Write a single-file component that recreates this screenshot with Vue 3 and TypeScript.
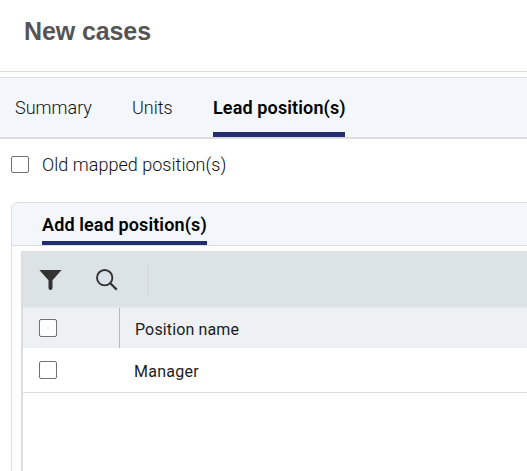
<script setup lang="ts">
import { ref } from 'vue'

interface Tab {
  id: string
  label: string
}

const tabs: Tab[] = [
  { id: 'summary', label: 'Summary' },
  { id: 'units', label: 'Units' },
  { id: 'lead', label: 'Lead position(s)' },
]
const activeTab = ref('lead')
const showOld = ref(false)
const allSelected = ref(false)
const rows = ref([{ name: 'Manager', selected: false }])
</script>

<template>
  <main class="page">
    <header class="heading"><h1>New cases</h1></header>

    <nav class="tabs">
      <button
        v-for="tab in tabs"
        :key="tab.id"
        :class="['tab', tab.id, { active: tab.id === activeTab }]"
        @click="activeTab = tab.id"
      >
        <span>{{ tab.label }}</span>
      </button>
    </nav>

    <label class="old">
      <input v-model="showOld" class="check short" type="checkbox" />
      <span>Old mapped position(s)</span>
    </label>

    <section class="panel">
      <div class="panel-head"><h2><span>Add lead position(s)</span></h2></div>
      <div class="grid">
        <div class="toolbar">
          <svg class="filter" width="24" height="22" viewBox="0 0 24 22">
            <path d="M.3 1H22.6L13.5 11.3V19a2 2 0 0 1-4 0V11.3Z" fill="#333" />
          </svg>
          <svg class="search" width="22" height="22" viewBox="0 0 22 22" fill="none" stroke="#333">
            <circle cx="8.7" cy="8.7" r="7.7" stroke-width="1.9" />
            <path d="M14.3 14.3L20.2 20.1" stroke-width="2.2" stroke-linecap="round" />
          </svg>
          <i class="separator"></i>
        </div>
        <div class="row head">
          <div class="cell select"><input v-model="allSelected" class="check" type="checkbox" /></div>
          <div class="cell name"><span>Position name</span></div>
        </div>
        <div v-for="row in rows" :key="row.name" class="row body">
          <div class="cell select"><input v-model="row.selected" class="check" type="checkbox" /></div>
          <div class="cell name"><span>{{ row.name }}</span></div>
        </div>
      </div>
    </section>
  </main>
</template>

<style>
body {
  margin: 0;
  background: #fff;
}
</style>

<style scoped>
.page {
  display: flex;
  flex-direction: column;
  box-sizing: border-box;
  width: 100%;
  height: 471px;
  overflow: hidden;
  font-family: Roboto, "Liberation Sans", sans-serif;
  color: #1c1c1c;
  white-space: nowrap;
}
.heading {
  box-sizing: border-box;
  flex: none;
  height: 72px;
  padding: 15px 24px 0;
  border-bottom: 1px solid #ddd;
}
h1 {
  margin: 0;
  font: 700 25px/32px "Liberation Sans", sans-serif;
  letter-spacing: -0.1px;
  color: #555;
}
.tabs {
  display: flex;
  flex: none;
  gap: 40px;
  box-sizing: border-box;
  height: 62px;
  margin-top: 5px;
  padding-left: 15px;
  border-top: 1px solid #ddd;
  border-bottom: 2px solid #ddd;
  background: #f3f6fb;
}
.tab {
  box-sizing: border-box;
  height: 59px;
  padding: 0;
  border: 0;
  border-bottom: 5px solid transparent;
  background: none;
  font: 300 18px/54px Roboto, sans-serif;
  color: #111;
  text-align: left;
  white-space: nowrap;
}
.tab span {
  display: block;
  padding-top: 5px;
  line-height: 49px;
}
.tab.summary {
  width: 77px;
}
.tab.units {
  width: 41px;
}
.tab.lead {
  width: 132px;
}
.tab.active {
  border-color: #222e70;
  font-weight: 600;
  letter-spacing: 0.13px;
  color: #000;
}
.old {
  display: flex;
  flex: none;
  gap: 13px;
  align-items: center;
  height: 51px;
  padding-left: 11px;
  font-size: 18px;
  font-weight: 300;
  letter-spacing: 0.03px;
  color: #111;
}
.check {
  appearance: none;
  display: block;
  flex: none;
  box-sizing: border-box;
  width: 18px;
  height: 18px;
  margin: 0;
  border: 1px solid #717171;
  border-radius: 2px;
  background: #fff;
}
.check.short {
  height: 17px;
}
.panel {
  flex: 1;
  margin: 12px 0 0 11px;
  border: 1px solid #ddd;
  border-width: 1px 0 0 1px;
  border-top-left-radius: 7px;
  overflow: hidden;
}
.panel-head {
  box-sizing: border-box;
  height: 43px;
  padding-left: 30px;
  border-bottom: 1px solid #ddd;
  background: #f3f6fb;
}
h2 {
  box-sizing: border-box;
  width: 165px;
  height: 42px;
  margin: 0;
  padding-top: 3px;
  border-bottom: 4px solid #222e70;
  font-size: 18px;
  font-weight: 600;
  line-height: 38px;
  letter-spacing: 0.12px;
  color: #000;
}
.grid {
  height: 240px;
  margin: 5px 0 0 9px;
  border-left: 2px solid #ddd;
}
.toolbar {
  display: flex;
  align-items: flex-start;
  box-sizing: border-box;
  height: 57px;
  padding: 18px 0 0 16px;
  border-top: 1px solid #ddd;
  border-bottom: 1px solid #e4e8e9;
  background: #dbe3e6;
}
.filter {
  margin-top: -1px;
}
.search {
  margin: -1px 0 0 33px;
}
.separator {
  width: 2px;
  height: 35px;
  margin: -7px 0 0 29px;
  background: #dbdbdc;
}
.row {
  display: flex;
  box-sizing: border-box;
}
.head {
  height: 40px;
  background: #edf1f4;
}
.body {
  height: 45px;
  border-bottom: 1px solid #ddd;
}
.cell {
  display: flex;
  align-items: center;
  box-sizing: border-box;
  font-size: 16px;
  letter-spacing: 0.13px;
}
.select {
  width: 97px;
  padding-left: 16px;
}
.head .select {
  border-right: 1px solid #b5b8ba;
}
.name {
  padding: 3px 0 0 15px;
}
.body .name {
  padding-left: 14px;
  letter-spacing: 0.25px;
}
</style>
